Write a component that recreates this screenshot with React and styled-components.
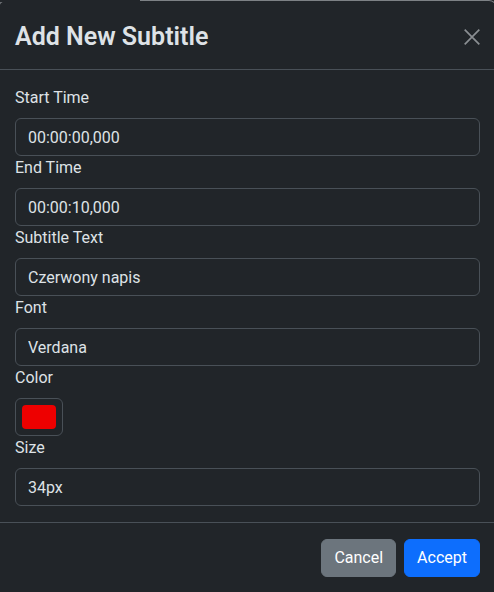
import React, { useState } from 'react';
import styled, { createGlobalStyle } from 'styled-components';

const GlobalStyle = createGlobalStyle`
  html, body {
    margin: 0;
    padding: 0;
    background: #212529;
  }
  body {
    font-family: Roboto, "Noto Sans", "Liberation Sans", sans-serif;
    color: #dee2e6;
    overflow: hidden;
  }
  * {
    box-sizing: border-box;
  }
`;

const Modal = styled.div`
  position: relative;
  margin: 0 -3px 0 -2px;
  background: #212529;
  border: 1px solid #7d8185;
  border-bottom: none;
  border-radius: 8px 8px 0 0;

  /* the left part of the top edge is hidden behind something in the shot */
  &::before {
    content: '';
    position: absolute;
    top: -1px;
    left: -1px;
    width: 142px;
    height: 2px;
    background: #212529;
  }
`;

const Header = styled.div`
  display: flex;
  align-items: center;
  padding: 18px 16px 14px;
  border-bottom: 1px solid #495057;
`;

const Title = styled.h4`
  margin: 0;
  font-size: 25px;
  font-weight: 600;
  line-height: 36px;
  color: #dee2e6;
`;

const CloseButton = styled.button`
  margin: -8px -5px -8px auto;
  width: 26px;
  height: 26px;
  padding: 4px;
  border: 0;
  background: transparent;
  color: #8b8f93;
  cursor: pointer;
  display: flex;
  align-items: center;
  justify-content: center;
`;

const Body = styled.div`
  padding: 16px;
`;

const Group = styled.div`
  display: flex;
  flex-direction: column;
`;

const Label = styled.label`
  display: block;
  font-size: 16px;
  line-height: 24px;
  margin-bottom: 8px;
  color: #dee2e6;
`;

const Input = styled.input`
  display: block;
  width: 100%;
  height: 38px;
  padding: 6px 12px;
  font-family: inherit;
  font-size: 16px;
  line-height: 24px;
  color: #dee2e6;
  background: #212529;
  border: 1px solid #495057;
  border-radius: 6px;
  outline: none;
`;

const ColorBox = styled.div`
  width: 48px;
  height: 38px;
  padding: 6px;
  border: 1px solid #495057;
  border-radius: 6px;
  background: #212529;
`;

const Swatch = styled.div`
  width: 100%;
  height: 100%;
  border-radius: 4px;
  background: ${({ color }) => color};
`;

const Footer = styled.div`
  display: flex;
  justify-content: flex-end;
  align-items: center;
  padding: 12px;
  border-top: 1px solid #495057;
`;

const Button = styled.button`
  margin: 4px;
  padding: 6px 12px;
  height: 38px;
  font-family: inherit;
  font-size: 16px;
  line-height: 24px;
  color: #fff;
  border: 1px solid ${({ primary }) => (primary ? '#0d6efd' : '#6c757d')};
  background: ${({ primary }) => (primary ? '#0d6efd' : '#6c757d')};
  border-radius: 6px;
  cursor: pointer;
`;

const App = () => {
  const [form, setForm] = useState({
    start: '00:00:00,000',
    end: '00:00:10,000',
    text: 'Czerwony napis',
    font: 'Verdana',
    color: '#ee0000',
    size: '34px',
  });

  const update = (key) => (e) => setForm({ ...form, [key]: e.target.value });

  return (
    <>
      <GlobalStyle />
      <Modal>
        <Header>
          <Title>Add New Subtitle</Title>
          <CloseButton aria-label="Close">
            <svg width="18" height="18" viewBox="0 0 16 16">
              <path d="M1.5 1.5l13 13M14.5 1.5l-13 13" stroke="currentColor" strokeWidth="1.5" />
            </svg>
          </CloseButton>
        </Header>
        <Body>
          <Group>
            <Label>Start Time</Label>
            <Input value={form.start} onChange={update('start')} />
          </Group>
          <Group>
            <Label>End Time</Label>
            <Input value={form.end} onChange={update('end')} />
          </Group>
          <Group>
            <Label>Subtitle Text</Label>
            <Input value={form.text} onChange={update('text')} />
          </Group>
          <Group>
            <Label>Font</Label>
            <Input value={form.font} onChange={update('font')} />
          </Group>
          <Group>
            <Label>Color</Label>
            <ColorBox>
              <Swatch color={form.color} />
            </ColorBox>
          </Group>
          <Group>
            <Label>Size</Label>
            <Input value={form.size} onChange={update('size')} />
          </Group>
        </Body>
        <Footer>
          <Button>Cancel</Button>
          <Button primary>Accept</Button>
        </Footer>
      </Modal>
    </>
  );
};

export default App;
